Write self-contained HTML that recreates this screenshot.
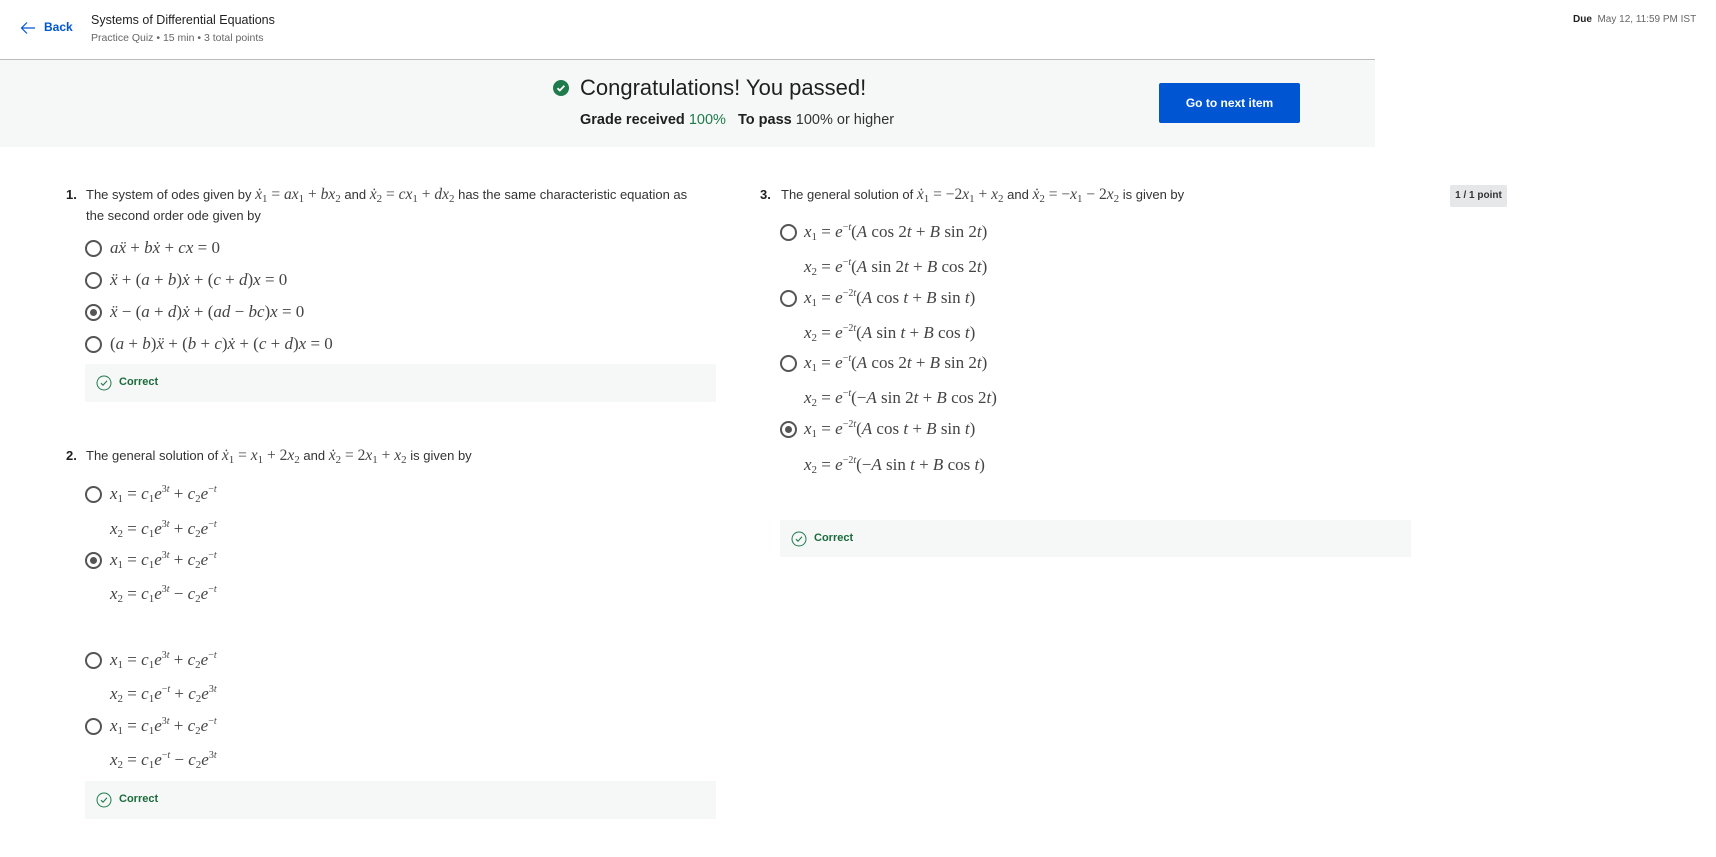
<!DOCTYPE html>
<html><head><meta charset="utf-8"><style>
body{margin:0;width:1716px;height:857px;background:#fff;position:relative;overflow:hidden;font-family:"Liberation Sans",sans-serif;color:#1f1f1f}
.a{position:absolute;white-space:nowrap}
.m{font-family:"Liberation Serif",serif;font-size:17px;color:#444;line-height:20px}
.m i{font-style:italic}
.m sub{font-size:11px;vertical-align:-3px;line-height:0}
.m sup{font-size:10px;vertical-align:7px;line-height:0}
.q{font-size:13px;color:#333;line-height:20px}
.q .m{font-size:15.5px}
.q b{color:#1f1f1f}
.r{position:absolute;width:13px;height:13px;border:2px solid #555;border-radius:50%;box-sizing:content-box}
.r.s::after{content:"";position:absolute;left:3px;top:3px;width:7px;height:7px;border-radius:50%;background:#555}
.ok{position:absolute;background:#f5f8f7}
.ok span{position:absolute;left:34px;top:0;font-size:11px;font-weight:bold;color:#1c6b3c}
.ok svg{position:absolute;left:11px}
</style></head><body>
<!-- header -->
<svg class="a" style="left:20px;top:21px" width="16" height="14" viewBox="0 0 16 14"><path d="M15 7H2M7 1.5L1.5 7 7 12.5" fill="none" stroke="#0056d2" stroke-width="1.2"/></svg>
<div class="a" style="left:44px;top:20px;font-size:12px;font-weight:bold;color:#0056d2">Back</div>
<div class="a" style="left:91px;top:13px;font-size:12.5px;color:#1f1f1f">Systems of Differential Equations</div>
<div class="a" style="left:91px;top:32px;font-size:10.5px;color:#666">Practice Quiz • 15 min • 3 total points</div>
<div class="a" style="left:1573px;top:14px;font-size:10px;color:#666"><b style="color:#1f1f1f">Due</b>&nbsp;&nbsp;May 12, 11:59 PM IST</div>
<div class="a" style="left:0;top:59px;width:1375px;height:1px;background:#bbb"></div>
<div class="a" style="left:0;top:60px;width:1375px;height:87px;background:#f5f8f7"></div>
<svg class="a" style="left:553px;top:80px" width="16" height="16" viewBox="0 0 16 16"><circle cx="8" cy="8" r="8" fill="#1f7a4c"/><path d="M4.5 8.3l2.3 2.2 4.6-4.8" fill="none" stroke="#fff" stroke-width="1.8"/></svg>
<div class="a" style="left:580px;top:75px;font-size:22px;color:#1f1f1f">Congratulations! You passed!</div>
<div class="a" style="left:580px;top:112px;font-size:14.5px;color:#333"><b style="color:#1f1f1f">Grade received</b> <span style="color:#1f7a4c">100%</span>&nbsp;&nbsp; <b style="color:#1f1f1f">To pass</b> 100% or higher</div>
<div class="a" style="left:1159px;top:83px;width:141px;height:40px;background:#0056d2;border-radius:2px;color:#fff;font-size:12px;font-weight:bold;text-align:center;line-height:40px">Go to next item</div>

<!-- Q1 -->
<div class="a q" style="left:66px;top:185px"><b>1.</b></div>
<div class="a q" style="left:86px;top:185px">The system of odes given by <span class="m"><i>ẋ</i><sub>1</sub> = <i>ax</i><sub>1</sub> + <i>bx</i><sub>2</sub></span> and <span class="m"><i>ẋ</i><sub>2</sub> = <i>cx</i><sub>1</sub> + <i>dx</i><sub>2</sub></span> has the same characteristic equation as</div>
<div class="a q" style="left:86px;top:206px">the second order ode given by</div>
<div class="r" style="left:85px;top:240px"></div><div class="a m" style="left:110px;top:238px"><i>aẍ</i> + <i>bẋ</i> + <i>cx</i> = 0</div>
<div class="r" style="left:85px;top:272px"></div><div class="a m" style="left:110px;top:270px"><i>ẍ</i> + (<i>a</i> + <i>b</i>)<i>ẋ</i> + (<i>c</i> + <i>d</i>)<i>x</i> = 0</div>
<div class="r s" style="left:85px;top:304px"></div><div class="a m" style="left:110px;top:302px"><i>ẍ</i> − (<i>a</i> + <i>d</i>)<i>ẋ</i> + (<i>ad</i> − <i>bc</i>)<i>x</i> = 0</div>
<div class="r" style="left:85px;top:336px"></div><div class="a m" style="left:110px;top:334px">(<i>a</i> + <i>b</i>)<i>ẍ</i> + (<i>b</i> + <i>c</i>)<i>ẋ</i> + (<i>c</i> + <i>d</i>)<i>x</i> = 0</div>
<div class="ok" style="left:85px;top:364px;width:631px;height:38px"><svg style="top:11px" width="16" height="16" viewBox="0 0 16 16"><circle cx="8" cy="8" r="7" fill="none" stroke="#1f7a4c"/><path d="M5 8.2l2 2 4-4.4" fill="none" stroke="#1f7a4c" stroke-width="1.1"/></svg><span style="top:12px">Correct</span></div>

<!-- Q2 -->
<div class="a q" style="left:66px;top:446px"><b>2.</b></div>
<div class="a q" style="left:86px;top:446px">The general solution of <span class="m"><i>ẋ</i><sub>1</sub> = <i>x</i><sub>1</sub> + 2<i>x</i><sub>2</sub></span> and <span class="m"><i>ẋ</i><sub>2</sub> = 2<i>x</i><sub>1</sub> + <i>x</i><sub>2</sub></span> is given by</div>
<div class="r" style="left:85px;top:486px"></div><div class="a m" style="left:110px;top:484px"><i>x</i><sub>1</sub> = <i>c</i><sub>1</sub><i>e</i><sup>3<i>t</i></sup> + <i>c</i><sub>2</sub><i>e</i><sup>−<i>t</i></sup></div>
<div class="a m" style="left:110px;top:519px"><i>x</i><sub>2</sub> = <i>c</i><sub>1</sub><i>e</i><sup>3<i>t</i></sup> + <i>c</i><sub>2</sub><i>e</i><sup>−<i>t</i></sup></div>
<div class="r s" style="left:85px;top:552px"></div><div class="a m" style="left:110px;top:550px"><i>x</i><sub>1</sub> = <i>c</i><sub>1</sub><i>e</i><sup>3<i>t</i></sup> + <i>c</i><sub>2</sub><i>e</i><sup>−<i>t</i></sup></div>
<div class="a m" style="left:110px;top:584px"><i>x</i><sub>2</sub> = <i>c</i><sub>1</sub><i>e</i><sup>3<i>t</i></sup> − <i>c</i><sub>2</sub><i>e</i><sup>−<i>t</i></sup></div>
<div class="r" style="left:85px;top:652px"></div><div class="a m" style="left:110px;top:650px"><i>x</i><sub>1</sub> = <i>c</i><sub>1</sub><i>e</i><sup>3<i>t</i></sup> + <i>c</i><sub>2</sub><i>e</i><sup>−<i>t</i></sup></div>
<div class="a m" style="left:110px;top:684px"><i>x</i><sub>2</sub> = <i>c</i><sub>1</sub><i>e</i><sup>−<i>t</i></sup> + <i>c</i><sub>2</sub><i>e</i><sup>3<i>t</i></sup></div>
<div class="r" style="left:85px;top:718px"></div><div class="a m" style="left:110px;top:716px"><i>x</i><sub>1</sub> = <i>c</i><sub>1</sub><i>e</i><sup>3<i>t</i></sup> + <i>c</i><sub>2</sub><i>e</i><sup>−<i>t</i></sup></div>
<div class="a m" style="left:110px;top:750px"><i>x</i><sub>2</sub> = <i>c</i><sub>1</sub><i>e</i><sup>−<i>t</i></sup> − <i>c</i><sub>2</sub><i>e</i><sup>3<i>t</i></sup></div>
<div class="ok" style="left:85px;top:781px;width:631px;height:38px"><svg style="top:11px" width="16" height="16" viewBox="0 0 16 16"><circle cx="8" cy="8" r="7" fill="none" stroke="#1f7a4c"/><path d="M5 8.2l2 2 4-4.4" fill="none" stroke="#1f7a4c" stroke-width="1.1"/></svg><span style="top:12px">Correct</span></div>

<!-- Q3 -->
<div class="a q" style="left:760px;top:185px"><b>3.</b></div>
<div class="a q" style="left:781px;top:185px">The general solution of <span class="m"><i>ẋ</i><sub>1</sub> = −2<i>x</i><sub>1</sub> + <i>x</i><sub>2</sub></span> and <span class="m"><i>ẋ</i><sub>2</sub> = −<i>x</i><sub>1</sub> − 2<i>x</i><sub>2</sub></span> is given by</div>
<div class="a" style="left:1450px;top:185px;width:57px;height:22px;background:#e5e7e8;border-radius:2px;font-size:10px;font-weight:bold;color:#333;text-align:center;line-height:22px">1 / 1 point</div>
<div class="r" style="left:780px;top:224px"></div><div class="a m" style="left:804px;top:222px"><i>x</i><sub>1</sub> = <i>e</i><sup>−<i>t</i></sup>(<i>A</i> cos 2<i>t</i> + <i>B</i> sin 2<i>t</i>)</div>
<div class="a m" style="left:804px;top:257px"><i>x</i><sub>2</sub> = <i>e</i><sup>−<i>t</i></sup>(<i>A</i> sin 2<i>t</i> + <i>B</i> cos 2<i>t</i>)</div>
<div class="r" style="left:780px;top:290px"></div><div class="a m" style="left:804px;top:288px"><i>x</i><sub>1</sub> = <i>e</i><sup>−2<i>t</i></sup>(<i>A</i> cos <i>t</i> + <i>B</i> sin <i>t</i>)</div>
<div class="a m" style="left:804px;top:323px"><i>x</i><sub>2</sub> = <i>e</i><sup>−2<i>t</i></sup>(<i>A</i> sin <i>t</i> + <i>B</i> cos <i>t</i>)</div>
<div class="r" style="left:780px;top:355px"></div><div class="a m" style="left:804px;top:353px"><i>x</i><sub>1</sub> = <i>e</i><sup>−<i>t</i></sup>(<i>A</i> cos 2<i>t</i> + <i>B</i> sin 2<i>t</i>)</div>
<div class="a m" style="left:804px;top:388px"><i>x</i><sub>2</sub> = <i>e</i><sup>−<i>t</i></sup>(−<i>A</i> sin 2<i>t</i> + <i>B</i> cos 2<i>t</i>)</div>
<div class="r s" style="left:780px;top:421px"></div><div class="a m" style="left:804px;top:419px"><i>x</i><sub>1</sub> = <i>e</i><sup>−2<i>t</i></sup>(<i>A</i> cos <i>t</i> + <i>B</i> sin <i>t</i>)</div>
<div class="a m" style="left:804px;top:455px"><i>x</i><sub>2</sub> = <i>e</i><sup>−2<i>t</i></sup>(−<i>A</i> sin <i>t</i> + <i>B</i> cos <i>t</i>)</div>
<div class="ok" style="left:780px;top:520px;width:631px;height:37px"><svg style="top:11px" width="16" height="16" viewBox="0 0 16 16"><circle cx="8" cy="8" r="7" fill="none" stroke="#1f7a4c"/><path d="M5 8.2l2 2 4-4.4" fill="none" stroke="#1f7a4c" stroke-width="1.1"/></svg><span style="top:12px">Correct</span></div>
</body></html>
